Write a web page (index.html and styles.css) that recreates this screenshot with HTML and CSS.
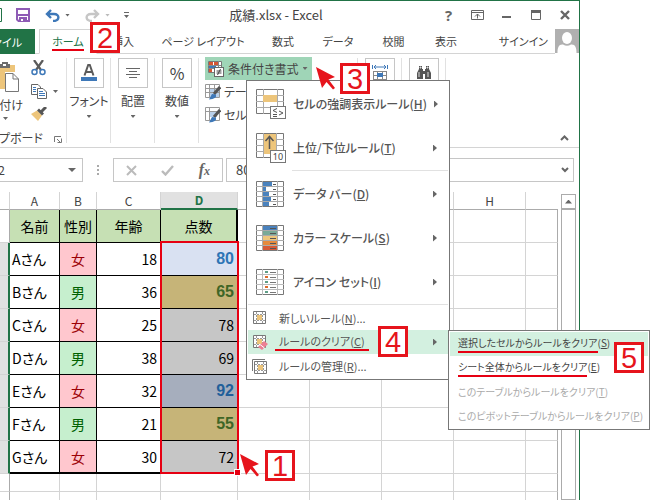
FILE: index.html
```html
<!DOCTYPE html>
<html lang="ja">
<head>
<meta charset="utf-8">
<title>成績.xlsx - Excel</title>
<link rel="stylesheet" href="styles.css">
</head>
<body>
<main class="window">
  <header class="titlebar">
    <div class="quick">
      <svg class="app-edge" width="3" height="14" viewBox="0 0 3 14"><path d="M0 .5H1.5V13.5H0" fill="none" stroke="#217346"/></svg>
      <button class="qa save" aria-label="保存"><svg width="14" height="14" viewBox="0 0 14 14"><path d="M1 1H13V13H2.500L1 11.500Z" fill="#fff" stroke="#8e5bb5" stroke-width="2"/><path d="M0 6H14V8H0ZM3 9H11V14H3Z" fill="#8e5bb5"/><path d="M5 11H7V13H5Z" fill="#fff"/></svg></button>
      <button class="qa undo" aria-label="元に戻す"><svg width="15" height="13" viewBox="0 0 15 13"><path d="M6 1L2 5L6 9M2 5H9C15 5 15 12 8 12" fill="none" stroke="#3e78b8" stroke-width="2.400"/></svg><i class="caret"></i></button>
      <button class="qa redo" aria-label="やり直し"><svg width="15" height="13" viewBox="0 0 15 13"><path d="M9 1L13 5L9 9M13 5H6C0 5 0 12 7 12" fill="none" stroke="#c6c6c6" stroke-width="2.400"/></svg><i class="caret pale"></i></button>
      <button class="qa custom" aria-label="クイック アクセスのカスタマイズ"><i class="caret barred"></i></button>
    </div>
    <h1 class="title">成績.xlsx - Excel</h1>
    <div class="controls">
      <button class="ctl help" aria-label="ヘルプ">?</button>
      <button class="ctl" aria-label="リボンの表示オプション"><svg width="13" height="10" viewBox="0 0 13 10"><path d="M.5 .5H12.500V9.500H.5ZM.5 2.500H12.500M6.500 8.500V4M4 6.500L6.500 4L9 6.500" fill="none" stroke="#666"/></svg></button>
      <button class="ctl" aria-label="最小化"><svg width="9" height="10" viewBox="0 0 9 10"><path d="M0 6H9V8H0Z" fill="#666"/></svg></button>
      <button class="ctl" aria-label="最大化"><svg width="10" height="10" viewBox="0 0 10 10"><path d="M.5 .5H9.500V9.500H.5Z" fill="none" stroke="#666"/><path d="M0 0H10V3H0Z" fill="#666"/></svg></button>
      <button class="ctl" aria-label="閉じる"><svg width="10" height="10" viewBox="0 0 10 10"><path d="M1 1L9 9M9 1L1 9" stroke="#666" stroke-width="2.400"/></svg></button>
    </div>
  </header>

  <nav class="tabs">
    <button class="tab file">ファイル</button>
    <span class="tab-gap"></span>
    <button class="tab active"><span class="marked">ホーム</span></button>
    <button class="tab">挿入</button>
    <button class="tab">ページ レイアウト</button>
    <button class="tab">数式</button>
    <button class="tab">データ</button>
    <button class="tab">校閲</button>
    <button class="tab">表示</button>
    <button class="tab signin">サインイン</button>
    <svg class="avatar" width="24" height="24" viewBox="0 0 24 24"><rect width="24" height="24" fill="#b0b0b0"/><ellipse cx="12" cy="9" rx="5" ry="6" fill="#fff"/><path d="M2.500 24C2.500 18 4 15 8 15.500Q12 18 16 15.500C20 15 21.500 18 21.500 24Z" fill="#fff"/></svg>
  </nav>

  <section class="ribbon">
    <div class="group clipboard">
      <button class="paste">
        <svg width="19" height="32" viewBox="0 0 19 32"><path d="M0 4H15V11H5V28H0Z" fill="#edc57b"/><path d="M0 3H2V1H8V3H10V7H0Z" fill="#6b6b6b"/><path d="M3 3H6V5H3Z" fill="#fff"/><path d="M5.500 12.500H13L18.500 18V30.500H5.500Z" fill="#fff" stroke="#777"/><path d="M13 12.500V18H18.500" fill="none" stroke="#777"/></svg>
        <span class="paste-label">貼り付け</span>
        <i class="caret"></i>
      </button>
      <div class="clip-tools">
        <button class="tool" aria-label="切り取り"><svg width="15" height="16" viewBox="0 0 15 16"><path d="M3 0L10 10M12 0L5 10" stroke="#5b5b5b" stroke-width="2.200"/><circle cx="3.500" cy="12" r="2.500" fill="none" stroke="#3e78b8" stroke-width="1.500"/><circle cx="11.500" cy="12" r="2.500" fill="none" stroke="#3e78b8" stroke-width="1.500"/></svg></button>
        <button class="tool copy" aria-label="コピー"><svg width="16" height="15" viewBox="0 0 16 15"><path d="M.5 .5H7L9.500 3V10.500H.5Z" fill="#fff" stroke="#666"/><path d="M2 3.500H5M2 5.500H5M2 7.500H5" stroke="#3e78b8"/><path d="M6.500 4.500H12L15.500 8V14.500H6.500Z" fill="#fff" stroke="#666"/><path d="M8 7.500H12M8 9.500H14M8 11.500H14" stroke="#3e78b8"/></svg><i class="caret"></i></button>
        <button class="tool" aria-label="書式のコピー"><svg width="16" height="14" viewBox="0 0 16 14"><path d="M0 7L6 3.500L11 8.500L7 14Z" fill="#edc57b"/><path d="M6 3.500L8 1.500L13 6.500L11 8.500Z" fill="#555"/><path d="M10 5L15 0" stroke="#555" stroke-width="3"/></svg></button>
      </div>
      <span class="clip-name">クリップボード</span>
      <svg class="launcher" width="8" height="7" viewBox="0 0 8 7"><path d="M.5 6V.5H7M3 3L6 6M7.500 2.500V6.500H3.500" fill="none" stroke="#777"/></svg>
    </div>
    <div class="group narrow">
      <button class="big"><span class="frame"><svg width="18" height="18" viewBox="0 0 18 18"><path d="M4.500 11.500L8.200 1H9.800L13.500 11.500M6 8H12" fill="none" stroke="#5b5b5b" stroke-width="2"/><path d="M1 13H17V17H1Z" fill="#3e78b8"/></svg></span>フォント<i class="caret"></i></button>
    </div>
    <div class="group narrow">
      <button class="big"><span class="frame"><svg width="14" height="12" viewBox="0 0 14 12"><path d="M0 1.500H14M3 4.500H11M0 7.500H14M3 10.500H11" stroke="#666"/></svg></span>配置<i class="caret"></i></button>
    </div>
    <div class="group narrow">
      <button class="big"><span class="frame percent">%</span>数値<i class="caret"></i></button>
    </div>
    <div class="group styles">
      <div class="cond-wrap">
        <button class="cond">
          <svg width="16" height="16" viewBox="0 0 16 16"><path d="M.5 .5H13.500V11.500H.5Z" fill="#fff" stroke="#777"/><path d="M1 1H5V4H1ZM1 8H4V11H1Z" fill="#d65532"/><path d="M6 1H10V4H6Z" fill="#d65532"/><path d="M1 5H8V7H1Z" fill="#3e78b8"/><path d="M0 4.500H13M0 7.500H13M10.500 0V6" stroke="#888"/><rect x="6.500" y="6.500" width="9" height="9" fill="#fff" stroke="#666"/><path d="M8.500 10H13.500M8.500 12H13.500M12.500 8L9.500 14" stroke="#444"/></svg>
          条件付き書式<i class="caret"></i>
        </button>
        <div class="menu" role="menu">
          <button class="item large" role="menuitem">
            <svg width="30" height="30" viewBox="0 0 30 30"><path d="M.5 .5H27.500V24.500H.5Z" fill="#fff" stroke="#777"/><path d="M7.500 0V25M21.500 0V25M0 6.500H28M0 12.500H28M0 18.500H28" stroke="#aaa"/><rect x="7" y="6" width="14" height="7" fill="#edc57b"/><rect x="14.500" y="17.500" width="15" height="12" fill="#fff" stroke="#777"/><path d="M21 19.500L17 21.500L21 23.500M17 25.500H21M17 27.500H21M23 22L27 24L23 26" fill="none" stroke="#555"/></svg>
            <span>セルの強調表示ルール(<u>H</u>)</span><i class="more"></i></button>
          <button class="item large" role="menuitem">
            <svg width="30" height="30" viewBox="0 0 30 30"><path d="M.5 .5H27.500V24.500H.5Z" fill="#fff" stroke="#777"/><path d="M7.500 0V25M20.500 0V25M0 6.500H28M0 12.500H28M0 18.500H28" stroke="#aaa"/><rect x="8" y="1" width="12" height="20" fill="#edc57b"/><path d="M13.500 16V4M9.500 8L13.500 3.500L17.500 8" fill="none" stroke="#555" stroke-width="1.500"/><rect x="14.500" y="17.500" width="15" height="12" fill="#fff" stroke="#777"/><text x="22" y="27" text-anchor="middle" class="ten">10</text></svg>
            <span>上位/下位ルール(<u>T</u>)</span><i class="more"></i></button>
          <hr>
          <button class="item large" role="menuitem">
            <svg width="28" height="26" viewBox="0 0 28 26"><path d="M.5 .5H27.500V25.500H.5Z" fill="#fff" stroke="#777"/><path d="M6.500 0V26M21.500 0V26M0 5.500H28M0 10.500H28M0 15.500H28M0 20.500H28" stroke="#aaa"/><path d="M7 1H16V5H7ZM7 6H10V10H7ZM7 11H13V15H7ZM7 16H15V20H7ZM7 21H13V25H7Z" fill="#4a82bd"/><path d="M17 3.500H20M17 8.500H20M17 13.500H20M17 18.500H20M17 23.500H20" stroke="#555"/></svg>
            <span>データ バー(<u>D</u>)</span><i class="more"></i></button>
          <button class="item large" role="menuitem">
            <svg width="28" height="26" viewBox="0 0 28 26"><path d="M.5 .5H27.500V25.500H.5Z" fill="#fff" stroke="#777"/><path d="M6.500 0V26M21.500 0V26M0 5.500H28M0 10.500H28M0 15.500H28M0 20.500H28" stroke="#aaa"/><path d="M7 1H21V5H7Z" fill="#4a82bd"/><path d="M7 6H21V10H7Z" fill="#79a997"/><path d="M7 11H21V15H7Z" fill="#edc57b"/><path d="M7 16H21V20H7Z" fill="#e68a3c"/><path d="M7 21H21V25H7Z" fill="#d65a36"/><path d="M14 3.500H20M14 8.500H20M14 13.500H20M14 18.500H20M14 23.500H20" stroke="#555"/></svg>
            <span>カラー スケール(<u>S</u>)</span><i class="more"></i></button>
          <button class="item large" role="menuitem">
            <svg width="28" height="26" viewBox="0 0 28 26"><path d="M.5 .5H27.500V25.500H.5Z" fill="#fff" stroke="#777"/><path d="M6.500 0V26M21.500 0V26M0 5.500H28M0 10.500H28M0 15.500H28M0 20.500H28" stroke="#bbb"/><path d="M9 2H12V4H9ZM9 12H12V14H9ZM9 22H12V24H9Z" fill="#5f9e87"/><path d="M9 7H12V9H9ZM9 17H12V19H9Z" fill="#de6a28"/><path d="M14 3.500H20M14 8.500H20M14 13.500H20M14 18.500H20M14 23.500H20" stroke="#777"/></svg>
            <span>アイコン セット(<u>I</u>)</span><i class="more"></i></button>
          <hr class="full">
          <button class="item" role="menuitem">
            <svg width="16" height="14" viewBox="0 0 16 14"><path d="M1.500 .5H13.500V12.500H1.500Z" fill="#fff" stroke="#777"/><path d="M4.500 1V12M10.500 1V12M2 3.500H13M2 9.500H13" stroke="#999" stroke-dasharray="2 1"/><rect x="5" y="4" width="5" height="5" fill="#edc57b"/></svg>
            <span>新しいルール(<u>N</u>)...</span></button>
          <div class="sub-wrap">
            <button class="item hot" role="menuitem">
              <svg width="16" height="15" viewBox="0 0 16 15"><path d="M1.500 .5H13.500V12.500H1.500Z" fill="#fff" stroke="#777"/><path d="M4.500 1V12M10.500 1V12M2 3.500H13M2 9.500H13" stroke="#999" stroke-dasharray="2 1"/><rect x="5" y="4" width="5" height="5" fill="#edc57b"/><path d="M6 12L12 6L16 9L10 15Z" fill="#ed7f93"/><path d="M8 9.500L12.500 13" stroke="#fff"/></svg>
              <span class="marked wide">ルールのクリア(<u>C</u>)</span><i class="more"></i></button>
            <div class="submenu" role="menu">
              <button class="item hot" role="menuitem"><span><span class="marked">選択したセルからルールをクリア</span>(<u>S</u>)</span></button>
              <button class="item" role="menuitem"><span><span class="marked">シート全体からルールをクリア</span>(<u>E</u>)</span></button>
              <button class="item" role="menuitem" disabled><span>このテーブルからルールをクリア(<u>T</u>)</span></button>
              <button class="item" role="menuitem" disabled><span>このピボットテーブルからルールをクリア(<u>P</u>)</span></button>
              <b class="badge five">5</b>
            </div>
            <b class="badge four">4</b>
          </div>
          <button class="item" role="menuitem">
            <svg width="16" height="15" viewBox="0 0 16 15"><path d="M.5 12V.5H13" fill="none" stroke="#777"/><path d="M2.500 2.500H14.500V14.500H2.500Z" fill="#fff" stroke="#777"/><path d="M5.500 3V14M11.500 3V14M3 5.500H14M3 11.500H14" stroke="#999" stroke-dasharray="2 1"/><rect x="6" y="6" width="5" height="5" fill="#edc57b"/></svg>
            <span>ルールの管理(<u>R</u>)...</span></button>
        </div>
        <svg class="pointer to-cond" width="19" height="23" viewBox="0 0 19 23"><path d="M0 0L19 10L12.500 12.500L19 21L17 22.500L10.500 15L6 21Z" fill="#e6141c"/></svg>
        <b class="badge three">3</b>
      </div>
      <button class="style-row"><svg width="16" height="16" viewBox="0 0 16 16"><path d="M.5 .5H14.500V13.500H.5Z" fill="#fff" stroke="#999"/><path d="M5 5H14V13H5Z" fill="#b9d0ea"/><path d="M4.500 0V14M9.500 0V14M0 4.500H15M0 8.500H15" stroke="#999"/><path d="M9 10L15 3" stroke="#555" stroke-width="3"/><path d="M4 15.500L7 10L11 10.500Q12 15 4 15.500Z" fill="#3e78b8"/></svg>テーブルとして書式設定</button>
      <button class="style-row"><svg width="16" height="16" viewBox="0 0 16 16"><path d="M.5 .5H14.500V13.500H.5Z" fill="#fff" stroke="#999"/><path d="M0 4.500H15M4.500 0V14" stroke="#999"/><path d="M5 5H12V10H5Z" fill="#b9d0ea"/><path d="M9 10L15 3" stroke="#555" stroke-width="3"/><path d="M4 15.500L7 10L11 10.500Q12 15 4 15.500Z" fill="#3e78b8"/></svg>セルのスタイル</button>
    </div>
    <div class="group narrow">
      <button class="big" aria-label="セル"><span class="frame"><svg width="16" height="16" viewBox="0 0 16 16"><path d="M2 2H14M4 0L2 2L4 4M12 0L14 2L12 4M.5 0V4M15.500 0V4" fill="none" stroke="#3e78b8"/><path d="M1 6.500H15M1 10.500H15M1 14.500H15M1.500 6V16M5.500 6V16M10.500 6V16M14.500 6V16" stroke="#888"/><path d="M5 8H11V12H5Z" fill="#3e78b8"/></svg></span></button>
    </div>
    <div class="group narrow">
      <button class="big" aria-label="編集"><span class="frame"><svg width="16" height="14" viewBox="0 0 16 14"><path d="M3 0H6V3H7V5H9V3H10V0H13V3L15 7V13H9V8H7V13H1V7L3 3Z" fill="#555"/><path d="M4 1H5V2H4ZM11 1H12V2H11ZM3 6V11M12 6V11" fill="#fff" stroke="#ddd"/></svg></span></button>
    </div>
    <svg class="collapse" width="9" height="6" viewBox="0 0 9 6"><path d="M1 5L4.500 1.500L8 5" fill="none" stroke="#666" stroke-width="2"/></svg>
  </section>

  <section class="formula">
    <div class="namebox"><input class="name" aria-label="名前ボックス" value="D2"><i class="caret large-caret"></i></div>
    <span class="dots"></span>
    <div class="fx">
      <svg width="11" height="11" viewBox="0 0 11 11"><path d="M1 1L10 10M10 1L1 10" stroke="#bbb" stroke-width="2"/></svg>
      <svg width="13" height="11" viewBox="0 0 13 11"><path d="M1 6L4.500 9.500L12 1" fill="none" stroke="#bbb" stroke-width="2.400"/></svg>
      <span class="fx-sign">f<small>x</small></span>
    </div>
    <div class="entry"><input aria-label="数式バー" value="80"><svg width="8" height="6" viewBox="0 0 8 6"><path d="M1 1L4 4L7 1" fill="none" stroke="#666" stroke-width="2"/></svg></div>
  </section>

  <section class="sheet">
    <div class="grid">
      <table>
        <colgroup><col class="c-row"><col class="c-a"><col class="c-b"><col class="c-c"><col class="c-d"><col class="c-w"><col class="c-w"><col class="c-w"><col class="c-w"><col></colgroup>
        <thead><tr><th></th><th>A</th><th>B</th><th>C</th><th class="picked">D</th><th></th><th></th><th></th><th>H</th><th></th></tr></thead>
        <tbody>
          <tr class="heads"><th></th><td>名前</td><td>性別</td><td>年齢</td><td>点数</td><td></td><td></td><td></td><td></td><td></td></tr>
          <tr class="data"><th></th><td>Aさん</td><td class="f">女</td><td>18</td><td class="high light">80</td><td></td><td></td><td></td><td></td><td></td></tr>
          <tr class="data"><th></th><td>Bさん</td><td class="m">男</td><td>36</td><td class="low">65</td><td></td><td></td><td></td><td></td><td></td></tr>
          <tr class="data"><th></th><td>Cさん</td><td class="f">女</td><td>25</td><td class="mid">78</td><td></td><td></td><td></td><td></td><td></td></tr>
          <tr class="data"><th></th><td>Dさん</td><td class="m">男</td><td>38</td><td class="mid">69</td><td></td><td></td><td></td><td></td><td></td></tr>
          <tr class="data"><th></th><td>Eさん</td><td class="f">女</td><td>32</td><td class="high">92</td><td></td><td></td><td></td><td></td><td></td></tr>
          <tr class="data"><th></th><td>Fさん</td><td class="m">男</td><td>21</td><td class="low">55</td><td></td><td></td><td></td><td></td><td></td></tr>
          <tr class="data last"><th></th><td>Gさん</td><td class="f">女</td><td>30</td><td class="mid">72</td><td></td><td></td><td></td><td></td><td></td></tr>
          <tr class="blank"><th></th><td></td><td></td><td></td><td></td><td></td><td></td><td></td><td></td><td></td></tr>
          <tr class="blank"><th></th><td></td><td></td><td></td><td></td><td></td><td></td><td></td><td></td><td></td></tr>
        </tbody>
      </table>
      <div class="range"><i class="handle"></i></div>
      <svg class="pointer to-range" width="19" height="23" viewBox="0 0 19 23"><path d="M0 0L19 10L12.500 12.500L19 21L17 22.500L10.500 15L6 21Z" fill="#e6141c"/></svg>
      <b class="badge one">1</b>
    </div>
    <div class="scroll"><button class="up" aria-label="上へ"><i></i></button><div class="track"></div></div>
  </section>
  <b class="badge two">2</b>
</main>
</body>
</html>
```

FILE: styles.css
```css
* { box-sizing: border-box; }

body {
  margin: 0;
  height: 100vh;
  overflow: hidden;
  background: #fff;
  color: #444;
  font: 12px/16px "Noto Sans CJK JP", sans-serif;
  font-feature-settings: "palt";
}

button, input {
  font: inherit;
  font-feature-settings: inherit;
  color: inherit;
  background: none;
  border: 0;
  padding: 0;
  margin: 0;
  white-space: nowrap;
}

svg { display: block; flex: none; }

.window {
  position: relative;
  display: flex;
  flex-direction: column;
  height: 100vh;
  margin-right: 70px;
  border-top: 1px solid #217346;
  border-right: 1px solid #217346;
}

.caret {
  flex: none;
  width: 5px;
  height: 3px;
  background: #666;
  clip-path: polygon(0 0, 100% 0, 50% 100%);
}
.caret.pale { background: #bbb; }
.caret.large-caret { width: 8px; height: 4px; }
.caret.barred {
  height: 6px;
  clip-path: polygon(0 0, 100% 0, 100% 17%, 0 17%, 0 50%, 100% 50%, 50% 100%, 0 50%, 0 0);
}

/* Title bar */
.titlebar { display: flex; height: 28px; align-items: center; }
.quick { display: flex; align-items: center; width: 132px; }
.qa { display: flex; align-items: center; gap: 5px; }
.save { margin-left: 13px; }
.undo { margin-left: 15px; }
.redo { margin-left: 15px; }
.custom { margin-left: 14px; }
.title { flex: 1; margin: 0; font-size: 13px; font-weight: 400; text-align: center; }
.controls { display: flex; margin-left: 14px; }
.ctl { display: flex; align-items: center; justify-content: center; width: 29px; height: 28px; }
.help { font: bold 15px/16px "Open Sans", sans-serif; color: #666; }

/* Tabs */
.tabs {
  display: grid;
  grid-template-columns: 35px 4px 58px 52px 108px 52px 58px 53px 52px 1fr 24px;
  height: 25px;
  font-size: 11px;
}
.tab { border-bottom: 1px solid #d4d4d4; }
.tab-gap { border-bottom: 1px solid #d4d4d4; }
.file {
  display: flex;
  justify-content: flex-end;
  align-items: center;
  overflow: hidden;
  padding-right: 13px;
  background: #217346;
  color: #fff;
  border: 0;
}
.active { border: 1px solid #d4d4d4; border-bottom-color: #fff; color: #217346; }
.signin { padding-right: 7px; text-align: right; }
.marked { display: inline-block; height: 18px; border-bottom: 2px solid #e60012; }

/* Ribbon */
.ribbon { position: relative; display: flex; height: 94px; padding: 4px 0; border-bottom: 1px solid #d4d4d4; }
.group { height: 85px; border-right: 1px solid #e1e1e1; }
.clipboard {
  display: grid;
  grid-template: 76px 1fr / 31px 1fr 14px;
  width: 67px;
}
.paste { display: flex; flex-direction: column; align-items: flex-start; gap: 4px; padding-top: 3px; overflow: hidden; }
.paste-label { display: flex; justify-content: flex-end; width: 23px; }
.paste .caret { margin-left: 3px; }
.clip-tools { display: flex; flex-direction: column; gap: 8px; padding-top: 2px; grid-column: span 2; }
.tool { display: flex; align-items: center; gap: 6px; }
.clip-name { display: flex; justify-content: flex-end; grid-column: 1 / 3; width: 43px; overflow: hidden; white-space: nowrap; margin-top: -4px; height: 16px; }
.launcher { margin: 2px 0 0 2px; }
.narrow { width: 44px; }
.big { display: flex; flex-direction: column; align-items: center; gap: 5px; width: 100%; padding-left: 1px; }
.big .caret { margin-top: 1px; }
.frame { display: flex; align-items: center; justify-content: center; width: 30px; height: 30px; border: 1px solid #c6c6c6; }
.percent { font-size: 16px; }
.styles { width: 159px; padding-left: 6px; }
.cond-wrap { position: relative; margin-top: -1px; }
.cond { display: flex; align-items: center; gap: 4px; width: 107px; height: 23px; padding-left: 3px; background: #9fd5b7; }
.style-row { display: flex; align-items: center; gap: 3px; width: 48px; height: 23px; overflow: hidden; }
.collapse { margin: 77px 10px 0 auto; }

/* Menus */
.menu, .submenu { position: absolute; z-index: 2; padding: 1px; background: #fff; border: 1px solid #777; color: #555; }
.menu { left: 41px; top: 23px; width: 204px; }
.submenu { left: 100%; top: 0; width: 202px; }
.sub-wrap { position: relative; }
.item { display: flex; align-items: center; gap: 11px; width: 100%; height: 24px; padding: 0 11px 0 4px; font-size: 11px; }
.wide { margin: 0 -4px; padding: 0 4px; }
.large { height: 44px; padding-left: 8px; font-size: 12px; font-weight: 500; gap: 7px; }
.large svg[width="28"] { margin-right: 2px; }
.hot { background: #d3f0e0; }
.submenu .item { padding: 0 0 0 8px; font-size: 10px; color: #444; }
.submenu .item:disabled { color: #aaa; }
.more { flex: none; margin-left: auto; width: 4px; height: 7px; background: #666; clip-path: polygon(0 0, 100% 50%, 0 100%); }
.menu hr { height: 1px; margin: 0 0 1px 44px; border: 0; background: #e1e1e1; }
.menu hr.full { margin-left: 0; }
.ten { font: 9px "Noto Sans", sans-serif; fill: #444; }

/* Callouts */
.badge {
  position: absolute;
  z-index: 3;
  width: 30px;
  height: 31px;
  border: 3px solid #e6141c;
  background: #fff;
  color: #e6141c;
  font: 29px/26px "Liberation Sans", sans-serif;
  text-align: center;
}
.one { left: 265px; top: 258px; }
.two { left: 90px; top: 21px; }
.three { left: 135px; top: 6px; }
.four { left: 130px; top: -4px; }
.five { left: 165px; top: 11px; }
.pointer { position: absolute; z-index: 3; }
.to-cond { left: 111px; top: 10px; }
.to-range { left: 240px; top: 262px; }

/* Formula bar */
.formula { display: flex; height: 44px; padding: 10px 5px 10px 0; }
.namebox, .fx, .entry { display: flex; align-items: center; border: 1px solid #c6c6c6; }
.namebox { justify-content: flex-end; width: 83px; padding-right: 6px; border-left: 0; overflow: hidden; }
.name { flex: none; width: 78px; }
.dots { width: 2px; margin: 7px 14px 7px 14px; background: repeating-linear-gradient(#aaa 0 2px, #fff 2px 4px); }
.fx { width: 110px; justify-content: space-between; padding: 0 12px; }
.fx-sign { font: italic bold 16px/18px "Liberation Serif", serif; color: #666; }
.fx-sign small { font-size: 12px; }
.entry { flex: 1; margin-left: 3px; padding: 0 4px 0 9px; font-size: 13px; }
.entry input { flex: 1; min-width: 0; }

/* Sheet */
.sheet { display: flex; flex: 1; min-height: 0; gap: 3px; padding-right: 3px; }
.grid { position: relative; flex: 1; min-width: 0; }
table { width: 100%; table-layout: fixed; border-collapse: separate; border-spacing: 0; }
.c-row { width: 10px; }
.c-a { width: 50px; }
.c-b { width: 37px; }
.c-c { width: 64px; }
.c-d { width: 77px; }
.c-w { width: 72px; }
th, td { padding: 0; border-right: 1px solid #d4d4d4; border-bottom: 1px solid #d4d4d4; white-space: nowrap; overflow: hidden; }
thead th { height: 18px; font-weight: 400; line-height: 14px; border-bottom-color: #ababab; }
thead th.picked { background: #e1e1e1; color: #217346; font-weight: 700; border-bottom: 2px solid #217346; }
thead th:last-child { border-right: 0; }
tbody td:last-child { border-right-color: #ababab; }
tbody th { border-right-color: #ababab; }
.heads td { height: 33px; }
.heads td:nth-child(-n+5) { background: #c6e0b4; border-color: #000; text-align: center; font-size: 14px; color: #000; }
.heads td:nth-child(5) { border-right-width: 2px; }
.data th { background: #e1e1e1; border-right: 2px solid #217346; }
.data td { height: 33px; color: #000; font-size: 14px; }
.data td:nth-child(-n+5) { border-color: #000; }
.data td:nth-child(2) { padding-left: 2px; }
.data td:nth-child(3) { text-align: center; }
.data td:nth-child(4), .data td:nth-child(5) { text-align: right; padding-right: 3px; }
.data .f { background: #ffc7ce; color: #9c0006; }
.data .m { background: #c6efce; color: #006100; }
.data .mid { background: #c6c6c6; }
.data .high, .data .low { font: bold 16px/20px "Liberation Sans", sans-serif; }
.data .high { background: #a6aebd; color: #215f9a; }
.data .light { background: #d9e1f2; color: #2e75b6; }
.data .low { background: #c6b478; color: #3f6626; }
.last td:nth-child(-n+5) { border-bottom-width: 2px; }
.blank td { height: 18px; }
.range { position: absolute; left: 160px; top: 49px; width: 79px; height: 233px; border: 2px solid #e60012; }
.handle { position: absolute; right: -4px; bottom: -4px; width: 7px; height: 7px; border: 1px solid #fff; background: #e60012; }
.scroll { display: flex; flex-direction: column; width: 15px; padding-top: 2px; }
.up { display: flex; align-items: center; justify-content: center; height: 15px; border: 1px solid #ababab; }
.up i { width: 7px; height: 4px; background: #666; clip-path: polygon(50% 0, 100% 100%, 0 100%); }
.track { flex: 1; border: 1px solid #ababab; }
```
